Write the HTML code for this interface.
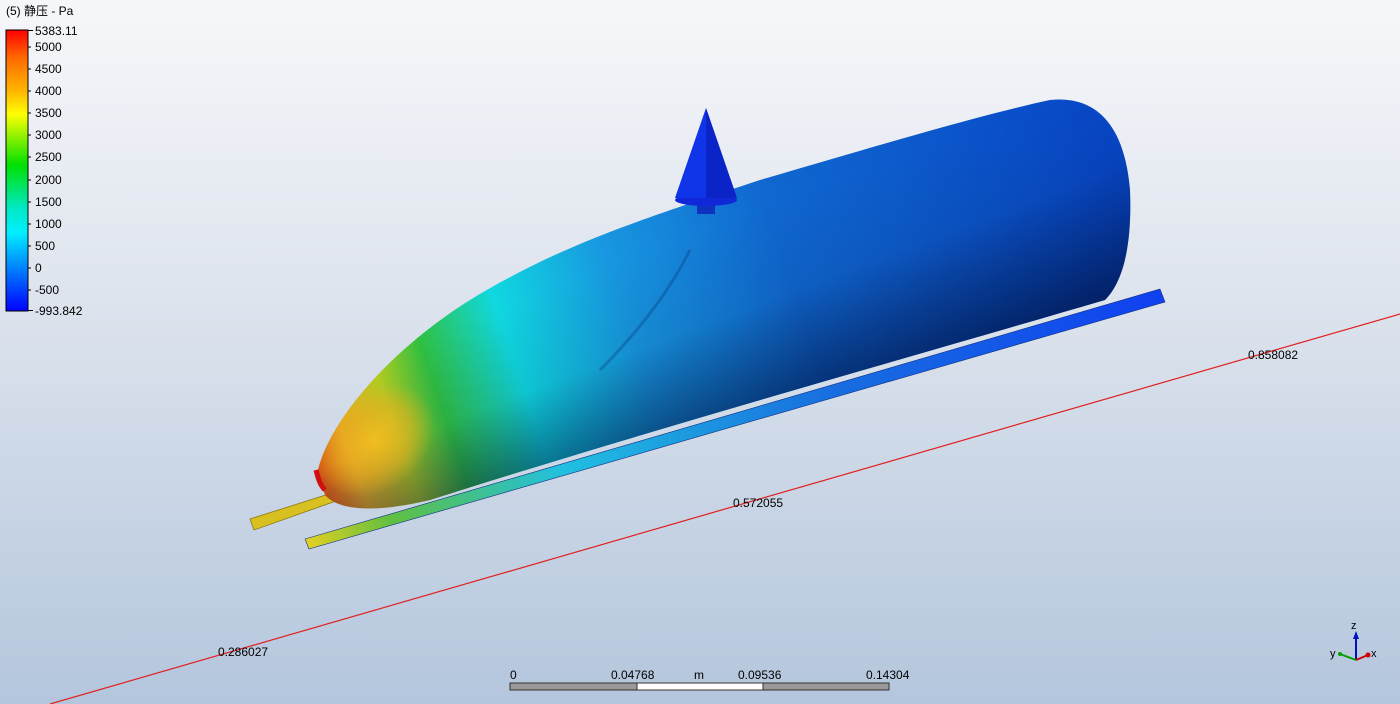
<!DOCTYPE html>
<html><head><meta charset="utf-8"><style>
html,body{margin:0;padding:0}
body{width:1400px;height:704px;overflow:hidden;position:relative;background:linear-gradient(#f6f7fa 0%,#dfe5ee 40%,#b4c6dd 100%);font-family:"Liberation Sans","Noto Sans CJK SC",sans-serif;}
.t{position:absolute;font-size:12px;color:#000;line-height:1}
</style></head><body>
<svg width="1400" height="704" style="position:absolute;left:0;top:0">
<defs>
<linearGradient id="lg" x1="0" y1="0" x2="0" y2="1">
<stop offset="0" stop-color="#ff0000"/><stop offset=".1" stop-color="#ff6a00"/><stop offset=".22" stop-color="#ffb800"/><stop offset=".3" stop-color="#ffff00"/><stop offset=".48" stop-color="#00e000"/><stop offset=".63" stop-color="#00e8c0"/><stop offset=".72" stop-color="#00f0ff"/><stop offset=".85" stop-color="#0080ff"/><stop offset="1" stop-color="#0000ff"/></linearGradient>
<linearGradient id="bg1" gradientUnits="userSpaceOnUse" x1="320" y1="470" x2="1120" y2="200">
<stop offset="0" stop-color="#e86010"/><stop offset=".04" stop-color="#f0b020"/><stop offset=".1" stop-color="#b8d020"/><stop offset=".16" stop-color="#30c040"/><stop offset=".26" stop-color="#10d8e0"/><stop offset=".4" stop-color="#1898e0"/><stop offset=".6" stop-color="#1068d0"/><stop offset="1" stop-color="#0848c8"/></linearGradient>
<linearGradient id="sh" gradientUnits="userSpaceOnUse" x1="700" y1="230" x2="780" y2="440">
<stop offset="0" stop-color="#001040" stop-opacity="0"/><stop offset=".4" stop-color="#001040" stop-opacity=".1"/><stop offset="1" stop-color="#001040" stop-opacity=".8"/></linearGradient>
<radialGradient id="nz" cx=".5" cy=".5" r=".5">
<stop offset="0" stop-color="#f8c020" stop-opacity=".85"/><stop offset=".6" stop-color="#f0b020" stop-opacity=".5"/><stop offset="1" stop-color="#f0b020" stop-opacity="0"/></radialGradient>
<linearGradient id="rl" gradientUnits="userSpaceOnUse" x1="305" y1="545" x2="1165" y2="295">
<stop offset="0" stop-color="#e8d020"/><stop offset=".1" stop-color="#60c040"/><stop offset=".3" stop-color="#20c0e0"/><stop offset=".6" stop-color="#1870e0"/><stop offset="1" stop-color="#1040f0"/></linearGradient>
<clipPath id="cp"><path id="bp" d="M318,470 C330,420 390,350 470,300 C560,245 640,220 760,180 C880,145 980,115 1050,100 C1100,95 1125,130 1130,190 C1132,240 1125,280 1105,300 C900,360 650,430 430,500 C380,512 340,512 325,495 Z"/></clipPath>
</defs>
<line x1="50" y1="704" x2="1400" y2="314" stroke="#e02020" stroke-width="1.2"/>
<polygon points="250,519 332,493 336,501 254,530" fill="#d8c020" stroke="#8a7a10" stroke-width=".8"/>
<polygon points="305,539 1160,289 1165,302 309,549" fill="url(#rl)" stroke="#103080" stroke-width=".6"/>
<g clip-path="url(#cp)">
<rect x="0" y="0" width="1400" height="704" fill="url(#bg1)"/>
<rect x="0" y="0" width="1400" height="704" fill="url(#sh)"/>
<ellipse cx="375" cy="440" rx="65" ry="50" fill="url(#nz)" transform="rotate(-40 375 440)"/>
<path d="M600,370 C640,330 670,290 690,250" stroke="#0a3a80" stroke-width="3" fill="none" opacity=".35"/>
</g>
<path d="M316,470 C318,478 320,485 325,490" stroke="#d01010" stroke-width="5" fill="none"/>
<rect x="697" y="200" width="18" height="14" fill="#1030c0"/>
<ellipse cx="706" cy="200" rx="31" ry="6" fill="#1028d8"/>
<polygon points="706,108 675,198 737,198" fill="#1034e8"/>
<polygon points="706,108 706,198 737,198" fill="#0a24c8"/>
<rect x="6" y="30" width="22" height="281" fill="url(#lg)" stroke="#000" stroke-width="1"/>
<g stroke="#000"><line x1="28" y1="30.5" x2="33" y2="30.5"/><line x1="28" y1="47" x2="31" y2="47"/><line x1="28" y1="69" x2="31" y2="69"/><line x1="28" y1="91" x2="31" y2="91"/><line x1="28" y1="113" x2="31" y2="113"/><line x1="28" y1="135" x2="31" y2="135"/><line x1="28" y1="157" x2="31" y2="157"/><line x1="28" y1="180" x2="31" y2="180"/><line x1="28" y1="202" x2="31" y2="202"/><line x1="28" y1="224" x2="31" y2="224"/><line x1="28" y1="246" x2="31" y2="246"/><line x1="28" y1="268" x2="31" y2="268"/><line x1="28" y1="290" x2="31" y2="290"/><line x1="28" y1="310.5" x2="33" y2="310.5"/></g>
<rect x="510" y="683" width="127" height="7" fill="#999" stroke="#333"/>
<rect x="637" y="683" width="126" height="7" fill="#fff" stroke="#333"/>
<rect x="763" y="683" width="126" height="7" fill="#999" stroke="#333"/>
<line x1="1356" y1="660" x2="1356" y2="636" stroke="#0010c0" stroke-width="2"/><polygon points="1356,631 1353,639 1359,639" fill="#0010c0"/>
<line x1="1356" y1="660" x2="1340" y2="654" stroke="#00a000" stroke-width="2"/><circle cx="1340" cy="654" r="2" fill="#00a000"/>
<line x1="1356" y1="660" x2="1368" y2="655" stroke="#d00000" stroke-width="2"/><circle cx="1368" cy="655" r="2.5" fill="#d00000"/>
</svg>
<div class="t" style="left:6px;top:5px">(5) 静压 - Pa</div>
<div class="t" style="left:35px;top:25px">5383.11</div>
<div class="t" style="left:35px;top:41px">5000</div>
<div class="t" style="left:35px;top:63px">4500</div>
<div class="t" style="left:35px;top:85px">4000</div>
<div class="t" style="left:35px;top:107px">3500</div>
<div class="t" style="left:35px;top:129px">3000</div>
<div class="t" style="left:35px;top:151px">2500</div>
<div class="t" style="left:35px;top:174px">2000</div>
<div class="t" style="left:35px;top:196px">1500</div>
<div class="t" style="left:35px;top:218px">1000</div>
<div class="t" style="left:35px;top:240px">500</div>
<div class="t" style="left:35px;top:262px">0</div>
<div class="t" style="left:35px;top:284px">-500</div>
<div class="t" style="left:35px;top:305px">-993.842</div>
<div class="t" style="left:1248px;top:349px">0.858082</div>
<div class="t" style="left:733px;top:497px">0.572055</div>
<div class="t" style="left:218px;top:646px">0.286027</div>
<div class="t" style="left:510px;top:669px">0</div>
<div class="t" style="left:611px;top:669px">0.04768</div>
<div class="t" style="left:694px;top:669px">m</div>
<div class="t" style="left:738px;top:669px">0.09536</div>
<div class="t" style="left:866px;top:669px">0.14304</div>
<div class="t" style="left:1351px;top:621px;font-size:11px">z</div>
<div class="t" style="left:1330px;top:649px;font-size:11px">y</div>
<div class="t" style="left:1371px;top:649px;font-size:11px">x</div>
</body></html>
